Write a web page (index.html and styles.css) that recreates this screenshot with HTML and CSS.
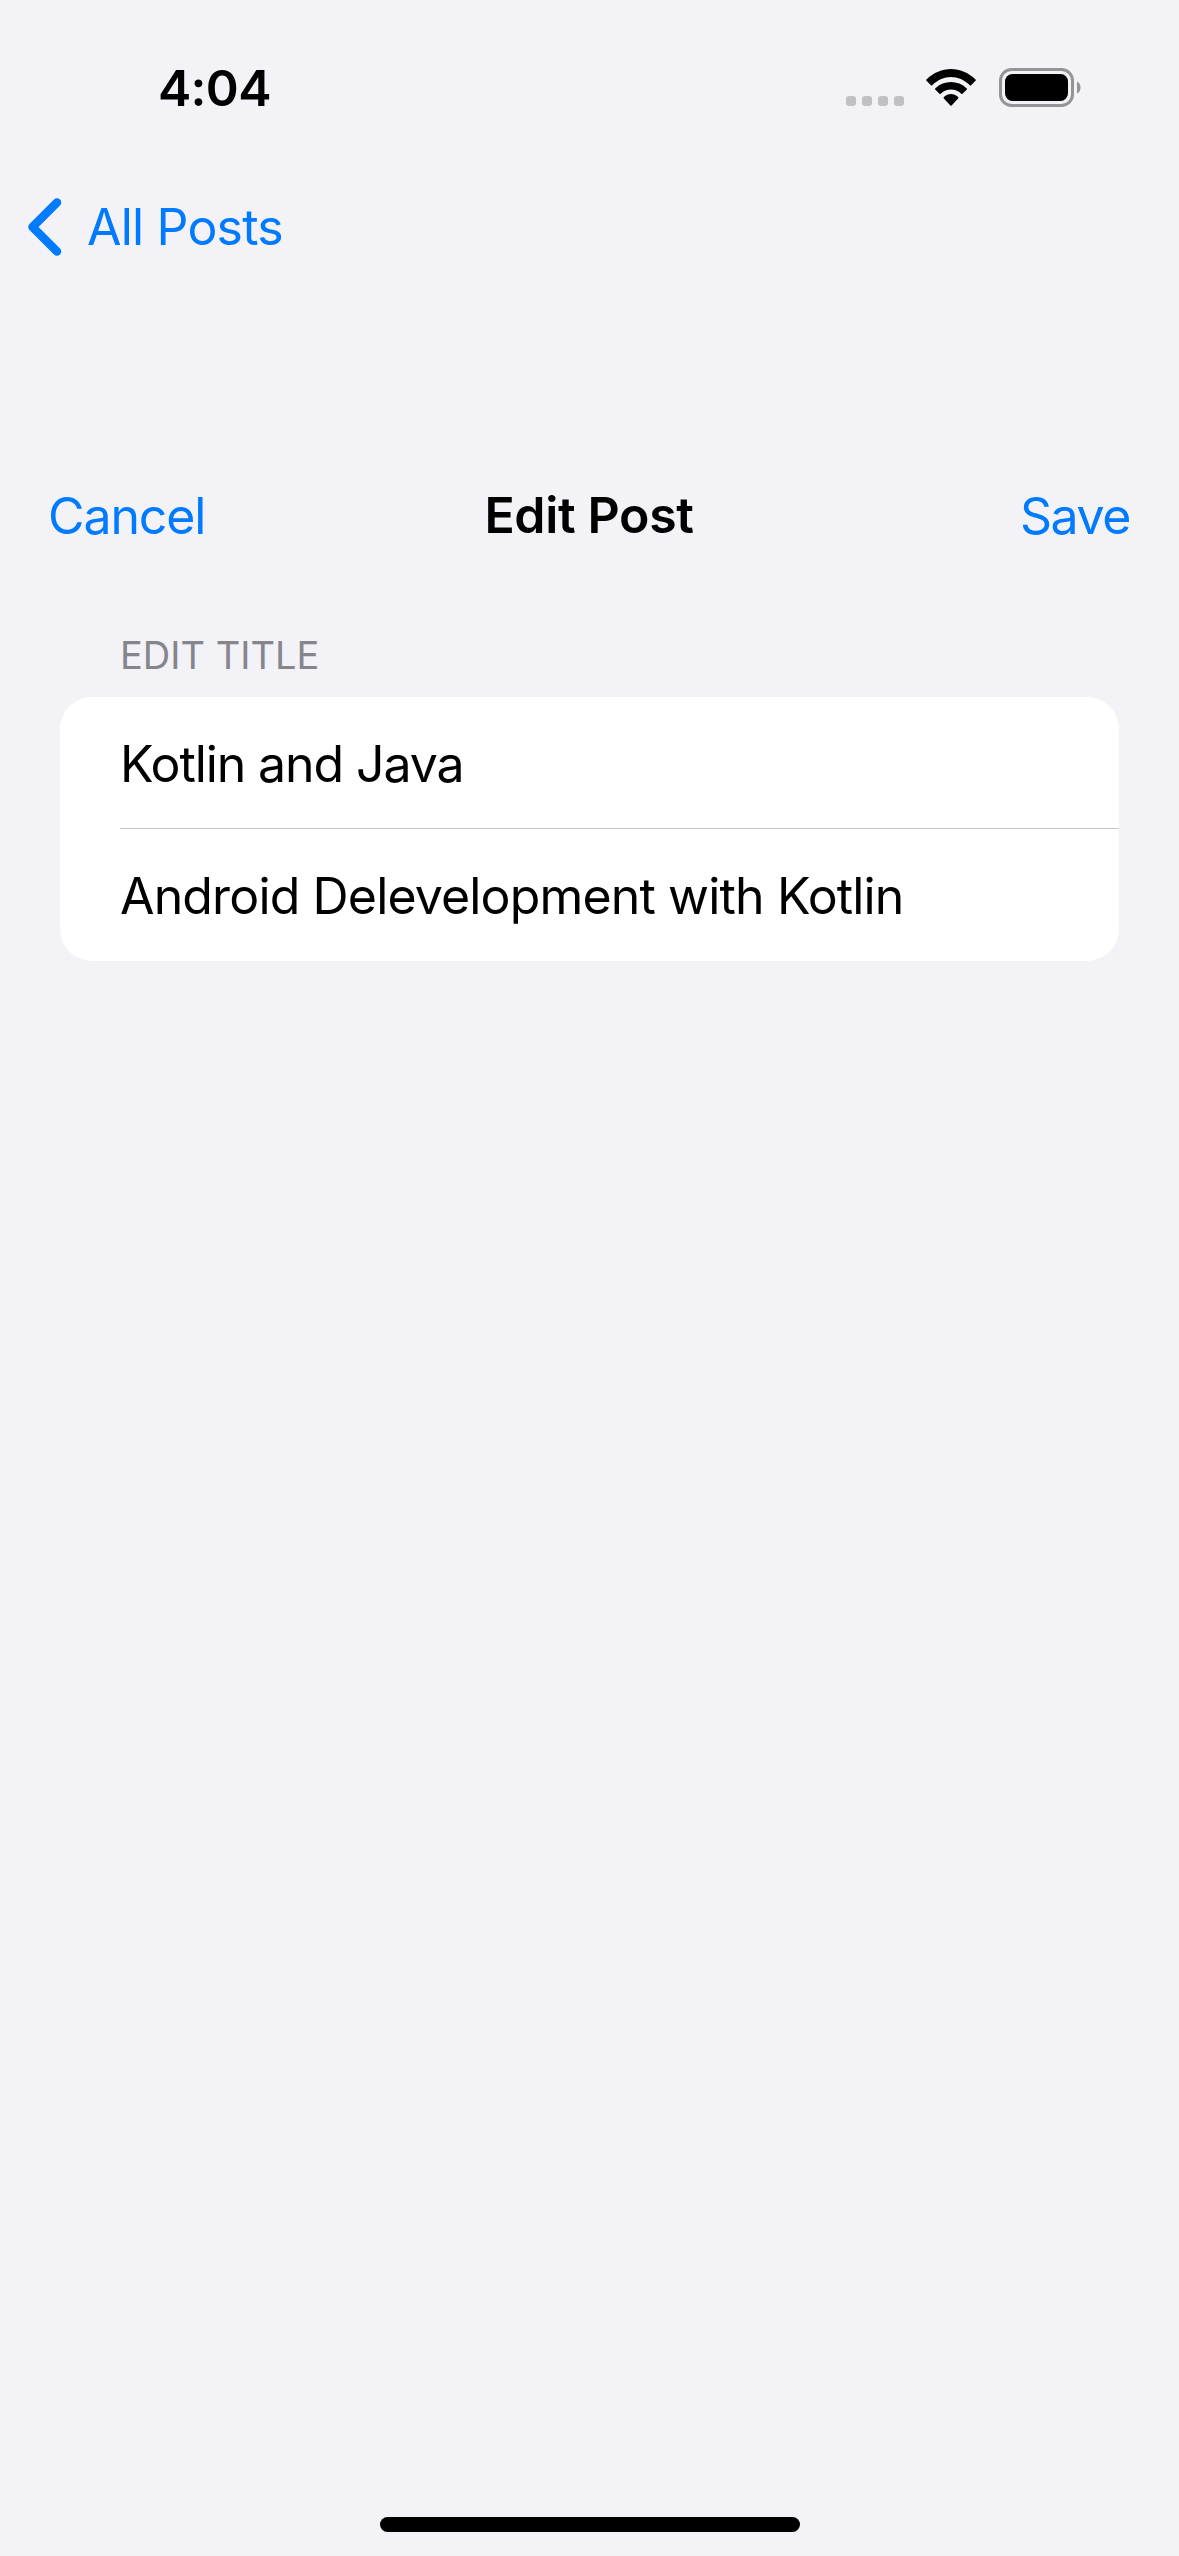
FILE: index.html
```html
<!DOCTYPE html>
<html lang="en">
<head>
<meta charset="utf-8">
<title>Edit Post</title>
<link rel="stylesheet" href="styles.css">
</head>
<body>
<div class="screen">
  <header class="status">
    <span class="time">4:04</span>
    <div class="indicators">
      <svg class="dots" width="58" height="10" viewBox="0 0 58 10"><rect width="10" height="10" rx="3.200"/><rect x="16" width="10" height="10" rx="3.200"/><rect x="32" width="10" height="10" rx="3.200"/><rect x="48" width="10" height="10" rx="3.200"/></svg>
      <svg class="wifi" width="50" height="37" viewBox="0 0 50 37"><path d="M.5 10.600C14.500-3.400 35.500-3.400 49.500 10.600q.6.600 0 1.200L45 16.200q-.6.500-1.200 0C33 5.200 17 5.200 6.200 16.200q-.6.500-1.200 0L.5 11.800q-.6-.6 0-1.200zM9.200 19.400c9-8.500 22.600-8.500 31.600 0q.6.600 0 1.200l-4.300 4.100q-.6.500-1.200 0c-6-5.600-14.600-5.600-20.600 0q-.6.500-1.200 0l-4.300-4.100q-.6-.6 0-1.200zM17.900 28.100c4.100-4 10.100-4 14.200 0q.6.700 0 1.300l-6.500 7q-.6.500-1.200 0l-6.500-7q-.6-.6 0-1.300z"/></svg>
      <svg class="battery" width="82" height="39" viewBox="0 0 82 39"><rect class="shell" x="1.500" y="1.500" width="72" height="36" rx="11"/><rect x="6" y="6" width="63" height="27" rx="7.500"/><path class="cap" d="M78 13.500v12c2.200-1 3.500-3.300 3.500-6s-1.300-5-3.500-6z"/></svg>
    </div>
  </header>
  <nav class="back">
    <svg class="chevron" width="34" height="58" viewBox="0 0 34 58"><path d="M29 4.500 4.500 29 29 53.500"/></svg>
    <a class="back-label">All Posts</a>
  </nav>
  <div class="toolbar">
    <a class="cancel">Cancel</a>
    <h1 class="title">Edit Post</h1>
    <a class="save">Save</a>
  </div>
  <main class="form">
    <h2 class="section">EDIT TITLE</h2>
    <div class="card">
      <div class="row"><span class="name">Kotlin and Java</span></div>
      <div class="row"><span class="desc">Android Delevelopment with Kotlin</span></div>
    </div>
  </main>
  <div class="home"></div>
</div>
</body>
</html>
```
FILE: styles.css
```css
* { box-sizing: border-box; }
body { margin: 0; background: #f2f2f7; color: #000; font-family: Inter, sans-serif; font-size: 50px; line-height: 66px; }
.screen { height: 2556px; display: flex; flex-direction: column; }
.status { height: 177px; padding: 55px 98px 0 158px; display: flex; justify-content: space-between; align-items: flex-start; flex: none; }
.time { font-weight: 600; letter-spacing: -.7px; }
.indicators { display: flex; align-items: flex-start; padding-top: 13px; }
.dots { fill: #c1c1c5; margin: 28px 22px 0 0; }
.wifi { margin: 1px 23px 0 0; }
.shell { fill: none; stroke: #949497; stroke-width: 3; }
.cap { fill: #949497; }
.back { height: 100px; padding-left: 28px; display: flex; align-items: center; flex: none; color: #007aff; }
.chevron { fill: none; stroke: #007aff; stroke-width: 8.5; stroke-linecap: round; stroke-linejoin: round; margin-right: 25px; }
.toolbar { margin-top: 206px; height: 66px; padding: 0 49px 0 48px; display: grid; grid-template-columns: 1fr auto 1fr; flex: none; }
.back-label, .cancel, .save, .title, .name, .desc { white-space: nowrap; }
.back-label { letter-spacing: -.8px; }
.cancel, .save { color: #007aff; }
.cancel { letter-spacing: -1.1px; }
.save { justify-self: end; letter-spacing: -1.4px; }
.title { margin: 0; font-size: 50px; line-height: 64px; font-weight: 600; letter-spacing: -.35px; }
.name { letter-spacing: -1.1px; }
.desc { letter-spacing: -.85px; }
.form { padding: 82px 60px 0; flex: 1; }
.section { margin: 0; height: 66px; padding-left: 60px; font-size: 38px; font-weight: 400; line-height: 49px; color: #85858b; }
.card { background: #fff; border-radius: 32px; padding-left: 60px; }
.row { height: 131px; padding-top: 2px; display: flex; align-items: center; }
.row + .row { border-top: 1px solid #c6c6c8; height: 133px; padding-top: 1px; }
.home { width: 420px; height: 15px; margin: 0 auto 24px; border-radius: 8px; background: #000; flex: none; }
```
